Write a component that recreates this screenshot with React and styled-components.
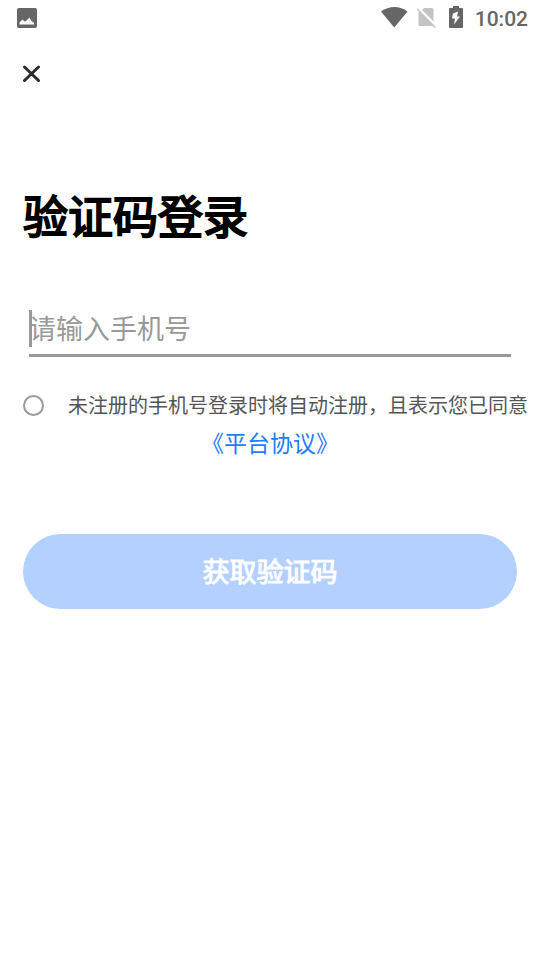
import { useState } from 'react';
import styled, { createGlobalStyle } from 'styled-components';

export default function App() {
  const [phone, setPhone] = useState('');
  const [agreed, setAgreed] = useState(false);

  return (
    <>
      <GlobalStyle />
      <StatusBar>
        <ImageIcon />
        <StatusIcons>
          <WifiIcon />
          <NoSimIcon />
          <BatteryIcon />
          <Clock>10:02</Clock>
        </StatusIcons>
      </StatusBar>

      <NavBar>
        <CloseButton type="button" aria-label="关闭">
          <CloseIcon />
        </CloseButton>
      </NavBar>

      <Form onSubmit={(e) => e.preventDefault()}>
        <Title>验证码登录</Title>

        <Field>
          <PhoneInput
            type="tel"
            aria-label="手机号"
            placeholder="请输入手机号"
            value={phone}
            onChange={(e) => setPhone(e.target.value)}
          />
          {!phone && <Caret />}
        </Field>

        <Consent>
          <Radio
            type="checkbox"
            id="agree"
            checked={agreed}
            onChange={(e) => setAgreed(e.target.checked)}
          />
          <ConsentLabel htmlFor="agree">
            未注册的手机号登录时将自动注册，且表示您已同意
          </ConsentLabel>
        </Consent>
        <Agreement href="#agreement">《平台协议》</Agreement>

        <SubmitButton type="submit">获取验证码</SubmitButton>
      </Form>
    </>
  );
}

function ImageIcon() {
  return (
    <svg width="20" height="20" viewBox="0 0 20 20" aria-hidden="true">
      <rect width="20" height="20" rx="2" fill="#666" />
      <path
        d="M2.5 16.5V14.5L5.500 11.500L7.500 13.500L9 13L12.500 9.500L14.500 13L17 15V16.500Z"
        fill="#fff"
      />
    </svg>
  );
}

function WifiIcon() {
  return (
    <svg width="28" height="22" viewBox="0 0 28 22" aria-hidden="true">
      <path d="M0 5.500C8 -0.500 19 -0.500 26.500 5.500L13.250 21.500Z" fill="#666" />
    </svg>
  );
}

function NoSimIcon() {
  return (
    <svg width="20" height="22" viewBox="0 0 20 22" aria-hidden="true">
      <path d="M7 2H15Q16.500 2 16.500 3.500V20H3Q1.500 20 1.500 18.500V7Z" fill="#c4c4c4" />
      <path d="M0 1L20 21" stroke="#fff" strokeWidth="3" />
      <path d="M-0.500 2.500L18.500 21.500" stroke="#c4c4c4" strokeWidth="1.500" />
    </svg>
  );
}

function BatteryIcon() {
  return (
    <svg width="14" height="22" viewBox="0 0 14 22" aria-hidden="true">
      <path
        d="M4 0H10V2H13Q14 2 14 3V21Q14 22 13 22H1Q0 22 0 21V3Q0 2 1 2H4Z"
        fill="#666"
      />
      <path d="M9 5.500L4 7.500L3 12.500H6L5 18.500L11 10.500H8Z" fill="#fff" />
    </svg>
  );
}

function CloseIcon() {
  return (
    <svg width="18" height="18" viewBox="0 0 18 18" aria-hidden="true">
      <path
        d="M2.500 2L16.500 15.500M16.500 2L2.500 15.500"
        stroke="#2b2b2b"
        strokeWidth="3"
        strokeLinecap="round"
      />
    </svg>
  );
}

const GlobalStyle = createGlobalStyle`
  * {
    box-sizing: border-box;
  }

  body {
    margin: 0;
    background: #fff;
    font-family: 'Noto Sans CJK SC', sans-serif;
  }

  button, input {
    font-family: inherit;
  }

  svg {
    display: block;
  }
`;

const StatusBar = styled.header`
  display: flex;
  align-items: center;
  justify-content: space-between;
  height: 36px;
  padding: 0 12px 0 17px;
`;

const StatusIcons = styled.div`
  display: flex;
  align-items: center;
  gap: 12px;
  padding-bottom: 2px;

  svg:first-child {
    margin-right: -4px;
  }
`;

const Clock = styled.time`
  font-family: Roboto, sans-serif;
  font-weight: 500;
  font-size: 21px;
  line-height: 24px;
  padding-top: 4px;
  color: #666;
`;

const NavBar = styled.nav`
  display: flex;
  align-items: center;
  height: 75px;
  padding: 0 22px;
`;

const CloseButton = styled.button`
  padding: 0;
  border: 0;
  background: none;
  cursor: pointer;
`;

const Form = styled.form`
  display: flex;
  flex-direction: column;
  padding: 72px 23px 0;
`;

const Title = styled.h1`
  margin: 0;
  font-size: 45px;
  font-weight: 400;
  line-height: 64px;
  color: #000;
  -webkit-text-stroke: 2px #000;
`;

const Field = styled.div`
  position: relative;
  margin: 56px 6px 0;
  border-bottom: 3px solid #999;
`;

const PhoneInput = styled.input`
  display: block;
  width: 100%;
  height: 51px;
  padding: 0 0 2px;
  border: 0;
  outline: 0;
  background: none;
  font-size: 27px;
  color: #333;

  &::placeholder {
    color: #999;
    opacity: 1;
  }
`;

const Caret = styled.span`
  position: absolute;
  top: 7px;
  left: 0;
  width: 3px;
  height: 37px;
  background: #999;
`;

const Consent = styled.div`
  display: flex;
  align-items: center;
  gap: 24px;
  margin: 33px -12px 0 0;
`;

const Radio = styled.input`
  appearance: none;
  flex: none;
  width: 21px;
  height: 21px;
  margin: 0;
  border: 2px solid #999;
  border-radius: 50%;

  &:checked {
    border: 6px solid #1f7cff;
  }
`;

const ConsentLabel = styled.label`
  font-size: 20px;
  line-height: 30px;
  color: #555;
`;

const Agreement = styled.a`
  align-self: center;
  margin-top: 6px;
  font-size: 23px;
  line-height: 32px;
  color: #1f7cff;
  text-decoration: none;
`;

const SubmitButton = styled.button`
  height: 75px;
  margin-top: 76px;
  padding: 0 0 2px;
  border: 0;
  border-radius: 38px;
  background: #b3d0ff;
  font-size: 27px;
  font-weight: 400;
  color: #fff;
  -webkit-text-stroke: 1px #fff;
  cursor: pointer;
`;
